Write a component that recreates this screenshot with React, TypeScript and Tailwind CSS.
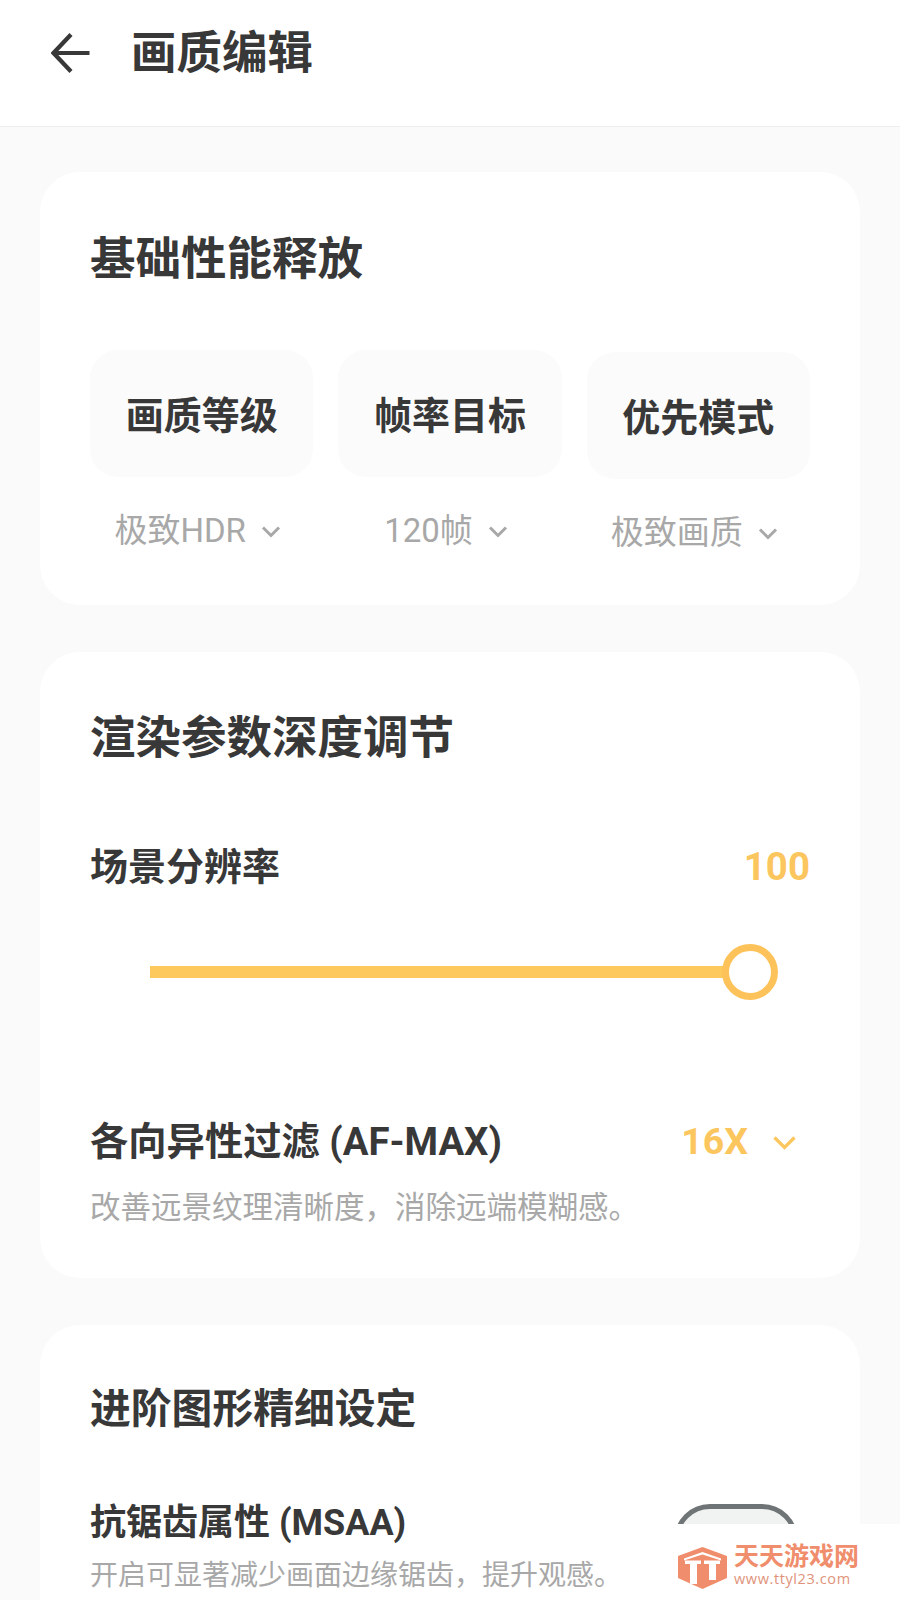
const cjk = { fontFamily: 'Roboto, "Noto Sans CJK SC", sans-serif' };

function Chevron({ className, stroke = '#a8a8a8', width = 3 }: { className: string; stroke?: string; width?: number }) {
  return (
    <svg className={className} viewBox="0 0 20 12" fill="none">
      <path d="M2 2 L10 10 L18 2" stroke={stroke} strokeWidth={width} />
    </svg>
  );
}

function Tile({ title, value, className = '' }: { title: string; value: string; className?: string }) {
  return (
    <div className={className}>
      <div className="h-[127px] rounded-[28px] bg-[#fbfbfb] flex items-center justify-center">
        <span className="text-[38px] leading-[50px] font-bold pt-[4px]">{title}</span>
      </div>
      <div className="mt-[31px] h-[46px] flex items-center justify-center gap-[15px] pr-[8px]">
        <span className="text-[33px] leading-[46px] text-[#a8a8a8]">{value}</span>
        <Chevron className="w-[20px] h-[13px]" />
      </div>
    </div>
  );
}

function Logo() {
  return (
    <svg className="w-[49px] h-[42px] shrink-0" viewBox="0 0 49 42" fill="none">
      <path d="M24.5 0 L49 9 V31 L24.5 42 L0 31 V9 Z" fill="#f08d6c" />
      <path d="M6 11.5 L24.5 5 L43 11.5 V13.5 L24.5 7.5 L6 13.5 Z" fill="#ffffff" />
      <path d="M7 13.5 H23 V17 H19 V37 H12 V17 H7 Z" fill="#ffffff" />
      <path d="M26 13.5 H42 V17 H38 V33 H31 V17 H26 Z" fill="#ffffff" />
    </svg>
  );
}

export default function App() {
  return (
    <div className="relative h-[1600px] w-[900px] overflow-hidden bg-[#fafafa] text-[#383838]" style={cjk}>
      <header className="h-[127px] bg-white border-b border-[#efefef] flex items-start pl-[51px] pt-[33px]">
        <svg className="w-[40px] h-[40px]" viewBox="0 0 40 40" fill="none">
          <path d="M38.5 20 H3 M20 1.5 L2.5 20 L20 38.5" stroke="#383838" strokeWidth="4.2" />
        </svg>
        <h1 className="ml-[40px] -mt-[7px] text-[45.5px] leading-[56px] font-bold">画质编辑</h1>
      </header>

      <main className="px-[40px] pt-[45px] flex flex-col gap-[47px]">
        <section className="bg-white rounded-[40px] px-[50px] pt-[63px] pb-[51px]">
          <h2 className="text-[45.5px] leading-[50px] font-bold">基础性能释放</h2>
          <div className="mt-[65px] grid grid-cols-3 gap-x-[25px]">
            <Tile title="画质等级" value="极致HDR" />
            <Tile title="帧率目标" value="120帧" />
            <Tile title="优先模式" value="极致画质" className="mt-[2px] -mb-[2px]" />
          </div>
        </section>

        <section className="bg-white rounded-[40px] px-[50px] pt-[62px] pb-[50px] h-[626px]">
          <h2 className="text-[45.5px] leading-[50px] font-bold">渲染参数深度调节</h2>
          <div className="mt-[78px] flex items-center justify-between">
            <span className="text-[38px] leading-[50px] font-bold">场景分辨率</span>
            <span className="text-[38.5px] leading-[50px] font-bold text-[#fcc65f]">100</span>
          </div>
          <div className="mt-[50px] h-[60px] flex items-center pl-[60px]">
            <div className="w-[590px] h-[12px] bg-[#fec95c]" />
            <div className="-ml-[18px] w-[56px] h-[56px] rounded-full border-[7px] border-[#fdc35a] bg-white" />
          </div>
          <div className="mt-[115px] flex items-center justify-between">
            <span className="text-[38.3px] leading-[50px] font-bold">各向异性过滤 (AF-MAX)</span>
            <div className="flex items-center gap-[24px] pr-[13px]">
              <span className="text-[37.5px] leading-[50px] font-bold text-[#fcc65f] -mt-[3px]">16X</span>
              <Chevron className="w-[25px] h-[15px]" stroke="#fcc65f" width={2.6} />
            </div>
          </div>
          <p className="mt-[21px] text-[30.5px] leading-[40px] text-[#a8a8a8]">改善远景纹理清晰度，消除远端模糊感。</p>
        </section>

        <section className="bg-white rounded-[40px] px-[50px] pt-[59px] pb-[50px]">
          <h2 className="text-[40.8px] leading-[50px] font-bold">进阶图形精细设定</h2>
          <div className="mt-[64px] flex items-start justify-between">
            <div>
              <div className="text-[36px] leading-[50px] font-bold">抗锯齿属性 (MSAA)</div>
              <p className="mt-[8px] text-[28px] leading-[40px] text-[#a8a8a8]">开启可显著减少画面边缘锯齿，提升观感。</p>
            </div>
            <div className="mt-[6px] mr-[12px] w-[124px] h-[72px] rounded-[36px] border-[5px] border-[#6f7576] bg-[#f1f2f2]" />
          </div>
        </section>
      </main>

      <div className="absolute right-0 bottom-0 w-[228px] h-[76px] bg-white flex items-start pl-[6px] pt-[23px] gap-[7px]">
        <Logo />
        <div className="flex flex-col">
          <span className="text-[25px] leading-[25px] font-bold text-[#f08d6c] -mt-[3px]">天天游戏网</span>
          <span className="mt-[1px] text-[14.5px] leading-[18px] tracking-[0.6px] text-[#e0937a]" style={{ fontFamily: '"Open Sans", sans-serif' }}>www.ttyl23.com</span>
        </div>
      </div>
    </div>
  );
}
